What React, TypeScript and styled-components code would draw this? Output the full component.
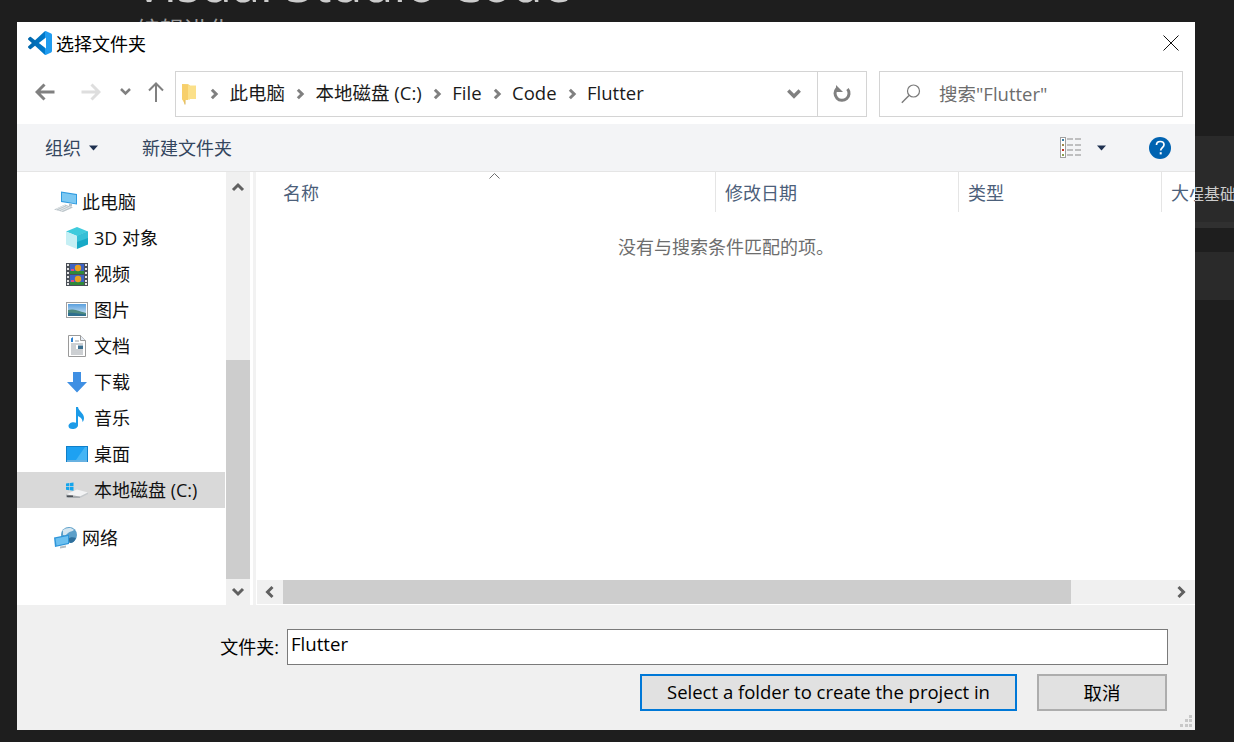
import React from "react";
import styled, { createGlobalStyle } from "styled-components";

const FONT = `"Open Sans", "Noto Sans CJK SC", sans-serif`;

const Global = createGlobalStyle`
  html, body { margin: 0; padding: 0; height: 100%; background: #1e1e1e; overflow: hidden; }
  #root { height: 100%; }
  * { box-sizing: border-box; }
`;

const Page = styled.div`
  position: relative;
  width: 1234px;
  height: 742px;
  overflow: hidden;
  background: #1e1e1e;
  padding-left: 135px;
  font-family: ${FONT};
`;
const BgTitle = styled.div`
  margin: -54px 0 0 -1px;
  height: 72px;
  line-height: 72px;
  font-size: 50.5px;
  font-weight: 400;
  color: #cccccc;
  white-space: nowrap;
  padding-top: 1px;
`;
const BgSubtitle = styled.div`
  height: 118px;
  margin-left: 1px;
  line-height: 24px;
  font-size: 24px;
  color: #9a9a9a;
  white-space: nowrap;
`;
const BgCard = styled.div<{ $h: number; $tall?: boolean }>`
  height: ${(p) => p.$h}px;
  margin-right: -2px;
  background: #2a2a2a;
  color: #cccccc;
  font-size: 16px;
  line-height: 24px;
  text-align: right;
  padding-top: 46px;
  overflow: hidden;
  border-bottom: ${(p) => (p.$tall ? "6px solid #303030" : "none")};
  margin-bottom: 24px;
`;

const Dialog = styled.div`
  position: absolute;
  left: 17px;
  top: 22px;
  width: 1178px;
  height: 708px;
  background: #ffffff;
  overflow: hidden;
  display: flex;
  flex-direction: column;
  font-size: 18px;
  color: #000;
`;

const TitleBar = styled.div`
  height: 49px;
  display: flex;
  align-items: center;
  padding: 0 16px 7px 11px;
  gap: 4px;
  flex: none;
`;
const TitleText = styled.span`
  font-size: 18px;
  flex: 1;
  white-space: nowrap;
`;

const NavRow = styled.div`
  height: 53px;
  flex: none;
  display: flex;
  align-items: flex-start;
  padding: 0 12px 7px 18px;
`;
const NavIcon = styled.svg<{ $mr: number }>`
  flex: none;
  margin-top: 11px;
  margin-right: ${(p) => p.$mr}px;
`;
const AddressBox = styled.div`
  width: 692px;
  height: 46px;
  border: 1px solid #d4d4d4;
  display: flex;
  align-items: center;
  flex: none;
  padding-left: 6px;
`;
const Crumbs = styled.div`
  flex: 1;
  display: flex;
  align-items: center;
  gap: 9.25px;
  white-space: nowrap;
  color: #1a1a1a;
  font-size: 18.5px;
`;
const CrumbText = styled.span`
  margin-bottom: 4px;
`;
const FolderSlot = styled.span`
  display: flex;
  flex: none;
  margin-right: 3px;
`;
const DropBtn = styled.div`
  width: 49px;
  height: 100%;
  margin-left: 15px;
  display: flex;
  align-items: center;
  justify-content: center;
  border-left: 1px solid #d4d4d4;
  flex: none;
`;
const SearchBox = styled.div`
  width: 304px;
  height: 46px;
  margin-left: 12px;
  border: 1px solid #d4d4d4;
  display: flex;
  align-items: center;
  padding-left: 21px;
  gap: 18px;
  color: #6d6d6d;
  flex: none;
  white-space: nowrap;
  font-size: 18.5px;
`;
const SearchText = styled.span`
  margin-bottom: 2px;
`;

const Toolbar = styled.div`
  height: 48px;
  flex: none;
  background: #f3f4f6;
  border-bottom: 1px solid #e5e5e5;
  display: flex;
  align-items: center;
  padding: 0 24px 0 28px;
  color: #34465e;
`;
const ToolText = styled.span<{ $mr: number }>`
  margin-right: ${(p) => p.$mr}px;
  margin-bottom: 2px;
  white-space: nowrap;
`;
const Spacer = styled.div`
  flex: 1;
`;

const Main = styled.div`
  height: 433px;
  flex: none;
  display: flex;
`;
const Sidebar = styled.div`
  width: 209px;
  flex: none;
  padding-top: 12px;
  display: flex;
  flex-direction: column;
`;
const TreeRow = styled.div<{ $group?: boolean; $selected?: boolean; $gapTop?: boolean }>`
  height: 36px;
  width: 208px;
  flex: none;
  display: flex;
  align-items: center;
  padding-left: ${(p) => (p.$group ? 37 : 49)}px;
  gap: ${(p) => (p.$group ? 4 : 6)}px;
  background: ${(p) => (p.$selected ? "#d9d9d9" : "transparent")};
  margin-top: ${(p) => (p.$gapTop ? 12 : 0)}px;
  white-space: nowrap;
  color: #111;
`;
const TreeLabel = styled.span`
  margin-bottom: 2px;
`;
const IconSlot = styled.span`
  width: 22px;
  flex: none;
  display: flex;
  justify-content: center;
`;
const VScroll = styled.div`
  width: 24px;
  flex: none;
  background: #f0f0f0;
  display: flex;
  flex-direction: column;
  align-items: stretch;
`;
const ScrollEnd = styled.div<{ $h: number }>`
  height: ${(p) => p.$h}px;
  flex: none;
  display: flex;
  align-items: center;
  justify-content: center;
`;
const VThumb = styled.div`
  height: 219px;
  flex: none;
  background: #cdcdcd;
`;
const VTrackGap = styled.div`
  flex: 1;
`;
const Splitter = styled.div`
  width: 7px;
  flex: none;
  display: flex;
  justify-content: center;
  padding-left: 1px;
`;
const SplitLine = styled.div`
  width: 3px;
  background: #f2f2f2;
`;
const Content = styled.div`
  flex: 1;
  min-width: 0;
  display: flex;
  flex-direction: column;
`;
const ColumnHeader = styled.div`
  position: relative;
  height: 40px;
  flex: none;
  display: flex;
  color: #4c607a;
`;
const Col = styled.div<{ $w: number; $pad?: number; $last?: boolean }>`
  width: ${(p) => p.$w}px;
  flex: none;
  padding-left: ${(p) => p.$pad ?? 9}px;
  line-height: 42px;
  white-space: nowrap;
  border-right: ${(p) => (p.$last ? "none" : "1px solid #e5e5e5")};
`;
const SortCaret = styled.svg`
  position: absolute;
  left: 232px;
  top: 1px;
`;
const FileArea = styled.div`
  flex: 1;
  text-align: center;
  padding-top: 22px;
  line-height: 26px;
  color: #6d6d6d;
`;
const HScroll = styled.div`
  height: 24px;
  margin-bottom: 1px;
  flex: none;
  background: #f0f0f0;
  display: flex;
  align-items: stretch;
`;
const HEnd = styled.div<{ $w: number }>`
  width: ${(p) => p.$w}px;
  flex: none;
  display: flex;
  align-items: center;
  justify-content: center;
`;
const HThumb = styled.div`
  width: 788px;
  flex: none;
  background: #cdcdcd;
`;

const Footer = styled.div`
  position: relative;
  flex: 1;
  background: #f0f0f0;
  padding: 24px 27px 0 0;
  display: flex;
  flex-direction: column;
  align-items: flex-end;
  gap: 9px;
`;
const NameRow = styled.div`
  display: flex;
  align-items: center;
  gap: 8px;
`;
const NameLabel = styled.span`
  margin-bottom: 2px;
`;
const NameInput = styled.div`
  width: 881px;
  height: 36px;
  background: #fff;
  border: 1px solid #7a7a7a;
  padding-left: 3px;
  line-height: 28px;
  font-size: 18.6px;
`;
const ButtonRow = styled.div`
  display: flex;
  gap: 20px;
  padding-right: 1px;
`;
const DialogButton = styled.div<{ $w: number; $primary?: boolean }>`
  width: ${(p) => p.$w}px;
  height: 37px;
  background: #e1e1e1;
  border: 2px solid ${(p) => (p.$primary ? "#0078d7" : "#adadad")};
  display: flex;
  align-items: center;
  justify-content: center;
  white-space: nowrap;
  font-size: 18.5px;
  padding-bottom: 2px;
`;
const Grip = styled.svg`
  position: absolute;
  right: 3px;
  bottom: 3px;
`;

const Chevron = ({ dir, color = "#606060", size = 14, w = 3 }: { dir: "up" | "down" | "left" | "right"; color?: string; size?: number; w?: number }) => {
  const d = {
    up: "M2 10 L7 5 L12 10",
    down: "M2 4 L7 9 L12 4",
    left: "M9.5 2 L4.5 7 L9.5 12",
    right: "M4.5 2 L9.5 7 L4.5 12",
  }[dir];
  return (
    <svg width={size} height={size} viewBox="0 0 14 14" style={{ flex: "none" }}>
      <path d={d} fill="none" stroke={color} strokeWidth={w} />
    </svg>
  );
};

const Caret = ({ mr = 0 }: { mr?: number }) => (
  <svg width="9" height="6" viewBox="0 0 9 6" style={{ flex: "none", marginRight: mr }}>
    <path d="M0 0.5h9L4.5 5.5z" fill="#1f3150" />
  </svg>
);

const VsLogo = () => (
  <svg width="24" height="24" viewBox="0 0 24 24" style={{ flex: "none" }}>
    <defs>
      <linearGradient id="vs" x1="0" x2="1" y1="0" y2="0">
        <stop offset="0" stopColor="#0065a9" />
        <stop offset="0.7" stopColor="#007acc" />
        <stop offset="0.72" stopColor="#1f9cf0" />
        <stop offset="1" stopColor="#1f9cf0" />
      </linearGradient>
    </defs>
    <path
      fill="url(#vs)"
      d="M23.15 2.587L18.21.21a1.494 1.494 0 0 0-1.705.29l-9.46 8.63-4.12-3.128a.999.999 0 0 0-1.276.057L.327 7.261A1 1 0 0 0 .326 8.74L3.899 12 .326 15.26a1 1 0 0 0 .001 1.479L1.65 17.94a.999.999 0 0 0 1.276.057l4.12-3.128 9.46 8.63a1.492 1.492 0 0 0 1.704.29l4.942-2.377A1.5 1.5 0 0 0 24 20.06V3.939a1.5 1.5 0 0 0-.85-1.352zm-5.146 14.861L10.826 12l7.178-5.448v10.896z"
    />
  </svg>
);

const CloseIcon = () => (
  <svg width="16" height="16" viewBox="0 0 16 16" style={{ flex: "none" }}>
    <path d="M0.5 0.5L15.5 15.5M15.5 0.5L0.5 15.5" stroke="#111" strokeWidth="1" />
  </svg>
);

const Folder = () => (
  <svg width="14" height="22" viewBox="0 0 14 22" style={{ flex: "none" }}>
    <path d="M0 1h6l2 1.5v14H0z" fill="#f5d77e" />
    <path d="M5.5 2.5H14V16H5.5z" fill="#fbe08a" />
    <path d="M0 1v15l3 5.5V17h3V2z" fill="#f7cf6b" />
    <path d="M3 21.5V17" stroke="#d9b45a" />
  </svg>
);

const PcIcon = () => (
  <svg width="24" height="22" viewBox="0 0 24 22" style={{ flex: "none" }}>
    <path d="M7 0.5L23 3v10.5L7 11z" fill="#2f9be0" />
    <path d="M8 1.8L22 4v8.5L8 10z" fill="#7cc8f2" />
    <path d="M15 12.5l3 .5v2.5l-3-.3z" fill="#b9c2c8" />
    <path d="M0 18.5L11 13.5l8 3-10 4.5z" fill="#bcc5ca" />
    <path d="M2 18.3l9-4M4.5 19.2l9-4M7 20l9-4" stroke="#eef1f3" strokeWidth="0.8" />
  </svg>
);
const CubeIcon = () => (
  <svg width="22" height="22" viewBox="0 0 22 22" style={{ flex: "none" }}>
    <path d="M11 0L22 4.5 11 9 0 4.5z" fill="#3fcbdc" />
    <path d="M0 4.5L11 9v13L0 17.5z" fill="#c5eff4" />
    <path d="M22 4.5L11 9v13l11-4.5z" fill="#17a9c6" />
    <path d="M11 9l11-4.5V11L11 15z" fill="#35bfd6" />
  </svg>
);
const FilmIcon = () => (
  <svg width="22" height="23" viewBox="0 0 22 23" style={{ flex: "none" }}>
    <rect width="22" height="23" fill="#4a4f57" />
    <rect x="4" y="1" width="14" height="10" fill="#3d63c4" />
    <rect x="4" y="12" width="14" height="10" fill="#3d63c4" />
    <rect x="4" y="8" width="14" height="3" fill="#2e8a3a" />
    <rect x="4" y="19" width="14" height="3" fill="#2e8a3a" />
    <circle cx="12" cy="5" r="3.2" fill="#e8a020" />
    <circle cx="12" cy="16" r="3.2" fill="#e8a020" />
    <rect x="5" y="6" width="3" height="2" fill="#e64a7a" />
    <rect x="5" y="17" width="3" height="2" fill="#e64a7a" />
    {[1, 5, 9, 13, 17, 20].map((y) => (
      <React.Fragment key={y}>
        <rect x="1" y={y} width="2" height="2" fill="#e6e6e6" />
        <rect x="19" y={y} width="2" height="2" fill="#e6e6e6" />
      </React.Fragment>
    ))}
  </svg>
);
const PictureIcon = () => (
  <svg width="22" height="16" viewBox="0 0 22 16" style={{ flex: "none" }}>
    <defs>
      <linearGradient id="sky" x1="0" x2="0" y1="0" y2="1">
        <stop offset="0" stopColor="#5aa0de" />
        <stop offset="1" stopColor="#dcecf6" />
      </linearGradient>
    </defs>
    <rect x="0.5" y="0.5" width="21" height="15" fill="#fff" stroke="#a0a0a0" />
    <rect x="2" y="2" width="18" height="12" fill="url(#sky)" />
    <path d="M2 8c5-1.5 9 .5 18 3v3H2z" fill="#4f8a80" />
    <path d="M2 11c6-1 10 1 18 1.5V14H2z" fill="#2f6f8f" />
  </svg>
);
const DocIcon = () => (
  <svg width="18" height="22" viewBox="0 0 18 22" style={{ flex: "none" }}>
    <path d="M.5.5h12l5 5v16H.5z" fill="#fff" stroke="#9a9a9a" />
    <path d="M12.5.5v5h5" fill="#e8eef5" stroke="#9a9a9a" />
    <path d="M3 3.5L5 2v5H3z" fill="#2a7fd0" />
    <path d="M7 6h4M3 9h12M3 11h5M3 13h5M3 15h12M3 17h12M3 19h12" stroke="#9aa0a6" />
    <rect x="10" y="10.5" width="5" height="3.5" fill="#3d6f8f" />
  </svg>
);
const DownloadIcon = () => (
  <svg width="20" height="21" viewBox="0 0 20 21" style={{ flex: "none" }}>
    <path d="M6 0h8v10h6L10 20.5 0 10h6z" fill="#3f8fe3" />
  </svg>
);
const MusicIcon = () => (
  <svg width="18" height="22" viewBox="0 0 18 22" style={{ flex: "none" }}>
    <path d="M8 0h2c.5 4 6 6 6 11 0 1.5-.5 3-1.5 4 .3-3-2.500-5-4.500-6v9c0 2.500-2.500 4-5.500 4C2 22 .5 20.800.5 19c0-2.200 2.500-3.800 5-3.800.9 0 1.800.2 2.500.6z" fill="#1c9be8" />
  </svg>
);
const DesktopIcon = () => (
  <svg width="22" height="16" viewBox="0 0 22 16" style={{ flex: "none" }}>
    <rect width="22" height="16" fill="#0f7fc9" />
    <rect x="1" y="1" width="20" height="13" fill="#1da1f2" />
    <path d="M10 14L19 1h2v13z" fill="#45b5f5" />
    <rect x="1" y="14.500" width="20" height="1" fill="#bfe3f9" />
  </svg>
);
const DriveIcon = () => (
  <svg width="22" height="16" viewBox="0 0 22 16" style={{ flex: "none" }}>
    <path d="M0 1.400L3.400 1v3.300H0zM4 .9L7.500 .4v3.900H4zM0 4.900h3.400v3.300L0 7.800zM4 4.900h3.500v3.800L4 8.300z" fill="#15a5ec" />
    <path d="M0 12.500l11-5 11 3-8 4z" fill="#f2f3f4" />
    <path d="M0 12.500l14 2V16H2l-2-1z" fill="#a6abaf" />
    <path d="M14 14.500l8-4v1.500L14 16z" fill="#c4c8cb" />
    <rect x="1" y="13.500" width="6" height="1.500" fill="#4a4f54" />
  </svg>
);
const NetIcon = () => (
  <svg width="24" height="22" viewBox="0 0 24 22" style={{ flex: "none" }}>
    <circle cx="15" cy="8" r="8" fill="#5c9fc9" />
    <path d="M9 3c3-2 8-3 11 0-2 2-4 1-6 3s-3 3-5 2z" fill="#d5e6f0" />
    <path d="M14 12c2-2 5-2 8-1-1 3-3 5-6 5z" fill="#2f6f9c" />
    <path d="M0 10.500L15 7.500V17L1 20z" fill="#2e95d9" />
    <path d="M1.500 11.500L14 9v7L2.500 18.500z" fill="#6cc0f0" />
    <path d="M6 19.500l6-1v2l-6 1z" fill="#b3bcc2" />
  </svg>
);

const ViewIcon = () => (
  <svg width="22" height="21" viewBox="0 0 22 21" style={{ flex: "none", marginRight: 15 }}>
    <rect x=".5" y=".5" width="5" height="20" fill="#fff" stroke="#a0a0a0" />
    <rect x="2" y="2" width="2" height="2" fill="#3a7ca5" />
    <rect x="2" y="7" width="2" height="2" fill="#a08a4a" />
    <rect x="2" y="12" width="2" height="2" fill="#c03020" />
    <rect x="2" y="17" width="2" height="2" fill="#8aa050" />
    <path d="M7 2h6M15 2h6M7 8h6M15 8h6M7 13h6M15 13h6M7 18h6M15 18h6" stroke="#8a8a8a" />
  </svg>
);
const HelpIcon = () => (
  <svg width="22" height="22" viewBox="0 0 22 22" style={{ flex: "none", marginLeft: 43 }}>
    <circle cx="11" cy="11" r="11" fill="#0063b1" />
    <path d="M7.500 8c0-2 1.500-3.500 3.700-3.500S15 5.800 15 7.800c0 2.700-3.300 3-3.300 5.700" fill="none" stroke="#fff" strokeWidth="1.700" />
    <rect x="10.700" y="15.200" width="2" height="2.200" fill="#fff" />
  </svg>
);

const tree = [
  { label: "3D 对象", Icon: CubeIcon },
  { label: "视频", Icon: FilmIcon },
  { label: "图片", Icon: PictureIcon },
  { label: "文档", Icon: DocIcon },
  { label: "下载", Icon: DownloadIcon },
  { label: "音乐", Icon: MusicIcon },
  { label: "桌面", Icon: DesktopIcon },
  { label: "本地磁盘 (C:)", Icon: DriveIcon, selected: true },
];
const crumbs = ["此电脑", "本地磁盘 (C:)", "File", "Code", "Flutter"];

export default function App() {
  return (
    <Page>
      <Global />
      <BgTitle>Visual Studio Code</BgTitle>
      <BgSubtitle>编辑进化</BgSubtitle>
      <BgCard $h={92} $tall>编程基础</BgCard>
      <BgCard $h={48} />
      <Dialog>
        <TitleBar>
          <VsLogo />
          <TitleText>选择文件夹</TitleText>
          <CloseIcon />
        </TitleBar>
        <NavRow>
          <NavIcon $mr={26} width="20" height="20" viewBox="0 0 20 20">
            <path d="M19.500 10H2M9.500 2.500L2 10l7.500 7.500" fill="none" stroke="#808080" strokeWidth="3" />
          </NavIcon>
          <NavIcon $mr={19} width="20" height="20" viewBox="0 0 20 20">
            <path d="M.5 10H18M10.500 2.500L18 10l-7.500 7.500" fill="none" stroke="#dedede" strokeWidth="3" />
          </NavIcon>
          <NavIcon $mr={17} width="11" height="20" viewBox="0 0 11 20">
            <path d="M1 7l4.500 4.500L10 7" fill="none" stroke="#808080" strokeWidth="2.500" />
          </NavIcon>
          <NavIcon $mr={11} width="16" height="20" viewBox="0 0 16 20">
            <path d="M8 20V2M1 8.500L8 1.500l7 7" fill="none" stroke="#808080" strokeWidth="2" />
          </NavIcon>
          <AddressBox>
            <Crumbs>
              <FolderSlot>
                <Folder />
              </FolderSlot>
              {crumbs.map((c) => (
                <React.Fragment key={c}>
                  <Chevron dir="right" color="#808080" size={12} w={3.5} />
                  <CrumbText>{c}</CrumbText>
                </React.Fragment>
              ))}
            </Crumbs>
            <Chevron dir="down" color="#808080" size={16} />
            <DropBtn>
              <svg width="18" height="18" viewBox="0 0 18 18">
                <path d="M4 3.500A7 7 0 1 0 14.500 4" fill="none" stroke="#808080" strokeWidth="3" />
                <path d="M3 0v7h7" fill="#808080" />
              </svg>
            </DropBtn>
          </AddressBox>
          <SearchBox>
            <svg width="20" height="20" viewBox="0 0 20 20" style={{ flex: "none" }}>
              <circle cx="12.500" cy="7" r="6" fill="none" stroke="#7a7a7a" strokeWidth="1.200" />
              <path d="M8 11.500L.8 18.800" stroke="#7a7a7a" strokeWidth="1.400" />
            </svg>
            <SearchText>搜索"Flutter"</SearchText>
          </SearchBox>
        </NavRow>
        <Toolbar>
          <ToolText $mr={8}>组织</ToolText>
          <Caret mr={44} />
          <ToolText $mr={0}>新建文件夹</ToolText>
          <Spacer />
          <ViewIcon />
          <Caret />
          <HelpIcon />
        </Toolbar>
        <Main>
          <Sidebar>
            <TreeRow $group>
              <PcIcon />
              <TreeLabel>此电脑</TreeLabel>
            </TreeRow>
            {tree.map(({ label, Icon, selected }) => (
              <TreeRow key={label} $selected={selected}>
                <IconSlot>
                  <Icon />
                </IconSlot>
                <TreeLabel>{label}</TreeLabel>
              </TreeRow>
            ))}
            <TreeRow $group $gapTop>
              <NetIcon />
              <TreeLabel>网络</TreeLabel>
            </TreeRow>
          </Sidebar>
          <VScroll>
            <ScrollEnd $h={29}>
              <Chevron dir="up" />
            </ScrollEnd>
            <VTrackGap />
            <VThumb />
            <ScrollEnd $h={26}>
              <Chevron dir="down" />
            </ScrollEnd>
          </VScroll>
          <Splitter>
            <SplitLine />
          </Splitter>
          <Content>
            <ColumnHeader>
              <Col $w={459} $pad={26}>名称</Col>
              <SortCaret width="11" height="6" viewBox="0 0 11 6">
                <path d="M.5 5.500l5-5 5 5" fill="none" stroke="#6d6d6d" />
              </SortCaret>
              <Col $w={243}>修改日期</Col>
              <Col $w={203}>类型</Col>
              <Col $w={34} $last>大小</Col>
            </ColumnHeader>
            <FileArea>没有与搜索条件匹配的项。</FileArea>
            <HScroll>
              <HEnd $w={26}>
                <Chevron dir="left" />
              </HEnd>
              <HThumb />
              <Spacer />
              <HEnd $w={28}>
                <Chevron dir="right" />
              </HEnd>
            </HScroll>
          </Content>
        </Main>
        <Footer>
          <NameRow>
            <NameLabel>文件夹:</NameLabel>
            <NameInput>Flutter</NameInput>
          </NameRow>
          <ButtonRow>
            <DialogButton $w={377} $primary>Select a folder to create the project in</DialogButton>
            <DialogButton $w={130}>取消</DialogButton>
          </ButtonRow>
          <Grip width="12" height="12" viewBox="0 0 12 12">
            <path d="M9 0h3v3H9zM5 4h3v3H5zM9 4h3v3H9zM0 9h3v3H0zM5 9h3v3H5zM9 9h3v3H9z" fill="#c8c8c8" />
          </Grip>
        </Footer>
      </Dialog>
    </Page>
  );
}
